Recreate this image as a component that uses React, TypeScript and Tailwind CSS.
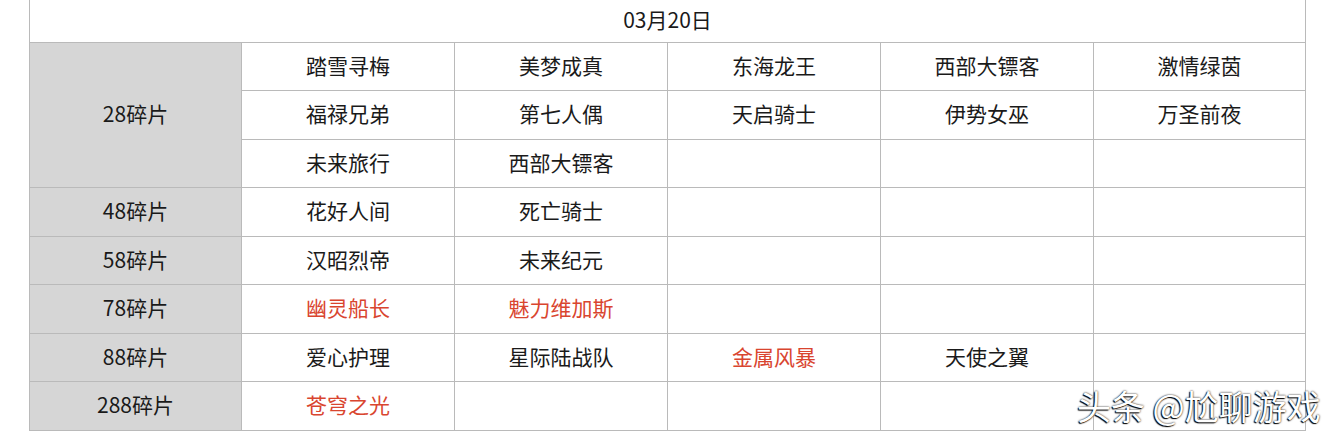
import React from 'react'

type Cell = { text: string; red?: boolean }

const rows: { label?: string; cells: Cell[] }[] = [
  { label: '28碎片', cells: [{ text: '踏雪寻梅' }, { text: '美梦成真' }, { text: '东海龙王' }, { text: '西部大镖客' }, { text: '激情绿茵' }] },
  { cells: [{ text: '福禄兄弟' }, { text: '第七人偶' }, { text: '天启骑士' }, { text: '伊势女巫' }, { text: '万圣前夜' }] },
  { cells: [{ text: '未来旅行' }, { text: '西部大镖客' }, { text: '' }, { text: '' }, { text: '' }] },
  { label: '48碎片', cells: [{ text: '花好人间' }, { text: '死亡骑士' }, { text: '' }, { text: '' }, { text: '' }] },
  { label: '58碎片', cells: [{ text: '汉昭烈帝' }, { text: '未来纪元' }, { text: '' }, { text: '' }, { text: '' }] },
  { label: '78碎片', cells: [{ text: '幽灵船长', red: true }, { text: '魅力维加斯', red: true }, { text: '' }, { text: '' }, { text: '' }] },
  { label: '88碎片', cells: [{ text: '爱心护理' }, { text: '星际陆战队' }, { text: '金属风暴', red: true }, { text: '天使之翼' }, { text: '' }] },
  { label: '288碎片', cells: [{ text: '苍穹之光', red: true }, { text: '' }, { text: '' }, { text: '' }, { text: '' }] },
]

export default function App() {
  return (
    <div className="relative w-[1334px] h-[439px] bg-white overflow-hidden font-['Noto_Sans_CJK_SC','Noto_Sans',sans-serif] text-[#1a1a1a]">
      <div className="ml-[29px] w-[1277px] grid grid-cols-[211px_212px_212px_212px_212px_211px] grid-rows-[42px_47px_48px_47px_48px_47px_48px_47px_48px] gap-px px-px pb-px bg-[#bababa]">
        <div className="col-span-6 bg-white flex items-center justify-center text-[21px] pb-[2px]">03月20日</div>
        {rows.map((row, i) => (
          <React.Fragment key={i}>
            {i === 0 && (
              <div className="row-span-3 bg-[#d6d6d6] flex items-center justify-center text-[21px] pb-[2px]">{row.label}</div>
            )}
            {row.label && i !== 0 && (
              <div className="bg-[#d6d6d6] flex items-center justify-center text-[21px] pb-[2px]">{row.label}</div>
            )}
            {row.cells.map((c, j) => (
              <div
                key={j}
                className={`bg-white flex items-center justify-center text-[21px] pb-[2px] ${c.red ? 'text-[#d9452f]' : ''}`}
              >
                {c.text}
              </div>
            ))}
          </React.Fragment>
        ))}
      </div>
      <div className="absolute left-[1077px] top-[389px] text-[34px] leading-none text-white whitespace-nowrap [text-shadow:-1px_1px_1px_#000,0_0_2px_#000]">
        头条 @尬聊游戏
      </div>
    </div>
  )
}
